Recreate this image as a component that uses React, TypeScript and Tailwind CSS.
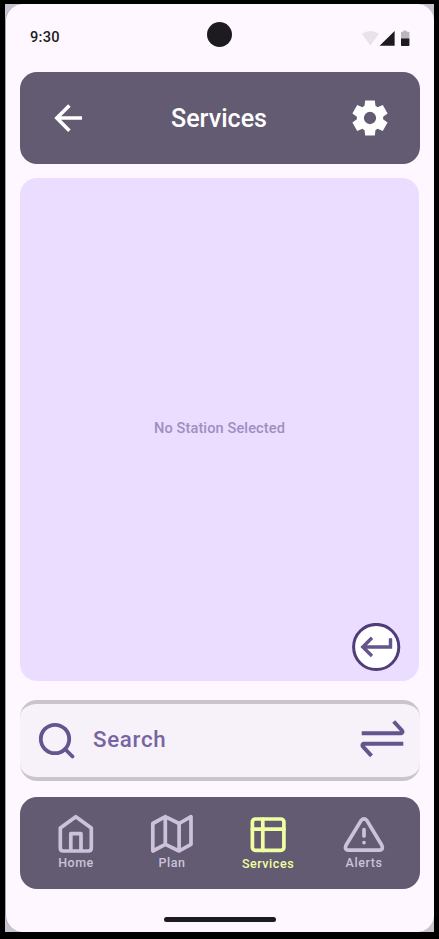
import React from "react";

function StatusBar() {
  return (
    <div className="relative flex h-[68px] w-full shrink-0 items-center justify-between pl-[25px] pr-[23px]">
      <span className="pb-[2px] text-[14.6px] leading-[20px] font-[460] tracking-[0.25px] text-[#1d1b20]">9:30</span>
      <div className="absolute left-[202px] top-[18px] size-[25px] rounded-full bg-[#1d1b20]" />
      <svg className="h-[17px] w-[50px]" viewBox="361 30 50 17" aria-hidden="true">
        <path d="M361.8 33.8Q370.3 28.2 379 33.8L370.3 45.6Z" fill="#e8e3ea" />
        <path d="M379.6 45.8L394.6 31V45.8Z" fill="#1d1b20" />
        <path d="M401 39V32.6Q401 31.8 401.8 31.8H403.3V30.4H406.6V31.8H408.6Q409.4 31.8 409.4 32.6V39Z" fill="#bbb6bd" />
        <path d="M401 38.6H409.4V45.2Q409.4 46 408.6 46H401.8Q401 46 401 45.2Z" fill="#1d1b20" />
      </svg>
    </div>
  );
}

function Header() {
  return (
    <header className="ml-[15px] flex h-[92px] w-[400px] shrink-0 items-center justify-between rounded-[17px] bg-[#625b71] pl-[33px] pr-[32px]">
      <button aria-label="Back">
        <svg className="h-[30px] w-[30px]" viewBox="53 103 30 30" fill="none" stroke="#fff" strokeWidth="3.6">
          <path d="M82 118H56.5M69.4 105.4L56.8 118L69.4 130.8" />
        </svg>
      </button>
      <h1 className="pt-px pl-[3px] text-[25.1px] leading-[32px] font-[460] text-white">Services</h1>
      <button aria-label="Settings">
        <svg className="size-[36px]" viewBox="69 -891 822 822" fill="#fff">
          <path d="m370-80-16-128q-13-5-24.5-12T307-235l-119 50L78-375l103-78q-1-7-1-13.5v-27q0-6.5 1-13.5L78-585l110-190 119 50q11-8 23-15t24-12l16-128h220l16 128q13 5 24.5 12t22.5 15l119-50 110 190-103 78q1 7 1 13.5v27q0 6.5-2 13.5l103 78-110 190-118-50q-11 8-23 15t-24 12L590-80H370Zm110-260q58 0 99-41t41-99-41-99-99-41q-59 0-99.5 41T340-480q0 58 40.5 99t99.5 41Z" />
        </svg>
      </button>
    </header>
  );
}

function StationPanel() {
  return (
    <main className="relative mt-[13.5px] ml-[15px] flex h-[503.5px] w-[399px] shrink-0 items-center justify-center rounded-[17px] bg-[#eaddff]">
      <p className="pb-[2px] text-[14.6px] leading-[20px] font-medium tracking-[0.1px] text-[#9e8fc0]">No Station Selected</p>
      <button aria-label="Enter" className="absolute right-[18px] bottom-[9.5px]">
        <svg className="size-[49px]" viewBox="352 623 49 49" fill="none">
          <circle cx="376.2" cy="647" r="22.6" fill="#fff" stroke="#4f3d7a" strokeWidth="3" />
          <path d="M390.5 638.3V647H363.5M372 637.8L362.8 647L372 656" stroke="#65558f" strokeWidth="3.4" />
        </svg>
      </button>
    </main>
  );
}

function SearchBar() {
  return (
    <div className="mt-[19px] ml-[15px] flex h-[81px] w-[400px] shrink-0 items-center rounded-[17px] border-y-4 border-[#cac4cb] bg-[#f7f1f9] pl-[18px] pr-[14px]">
      <svg className="h-[38px] w-[38px]" viewBox="38 722 38 38" fill="none" stroke="#65558f">
        <circle cx="55" cy="739" r="14.2" strokeWidth="3.8" />
        <path d="M65 749L72.5 756.5" strokeWidth="3.8" strokeLinecap="round" />
      </svg>
      <span className="ml-[17px] grow pb-[3px] text-[22.3px] leading-[28px] font-[460] tracking-[0.7px] text-[#7765a3]">Search</span>
      <svg className="h-[41px] w-[46px]" viewBox="360 720.8 46 41" fill="none" stroke="#65558f" strokeWidth="4" strokeLinejoin="round">
        <path d="M361.7 734H401.5Q403 733 402 731.3L393.7 722.3M403.3 744.5H363.5Q361.8 745.8 363 747.5L371.5 756.6" />
      </svg>
    </div>
  );
}

function NavItem({ label, active, children }: { label: string; active?: boolean; children: React.ReactNode }) {
  return (
    <a className={"flex w-[96px] flex-col items-center " + (active ? "text-[#f0ffa0]" : "text-[#ccc2dc]")}>
      <svg className="h-[44px] w-[48px]" viewBox="0.2 0 48 44" fill="none" stroke="currentColor" strokeWidth="3.7" strokeLinecap="round" strokeLinejoin="round">
        {children}
      </svg>
      <span className={"text-[12.5px] leading-[16px] font-[460] tracking-[0.55px] " + (active ? "mt-px" : "")}>{label}</span>
    </a>
  );
}

function BottomNav() {
  return (
    <nav className="mt-4 ml-[15px] flex h-[92px] w-[400px] shrink-0 justify-center rounded-[17px] bg-[#625b71] pt-[14px]">
      <NavItem label="Home">
        <path d="M24 5.7L39.5 17V37Q39.5 40 36.5 40H11.5Q8.5 40 8.5 37V17ZM19 40V22.7H29.2V40" />
      </NavItem>
      <NavItem label="Plan">
        <path d="M5 12.5L17.5 5.7L31.3 12.5L43.2 5.7V33.3L31.3 40L17.5 33.3L5 40ZM17.5 5.7V33.3M31.3 12.5V40" />
      </NavItem>
      <NavItem label="Services" active>
        <rect x="8.6" y="8" width="31.5" height="31.4" rx="3" />
        <path d="M8.6 18.2H40.1M19 8V39.4" />
      </NavItem>
      <NavItem label="Alerts">
        <path d="M21.4 9.4L6.2 34.3Q4.4 38.9 8.7 39.1H39.5Q43.8 38.9 42 34.3L27 9.4Q24.2 6.2 21.4 9.4ZM24.2 18.5V25M24.2 31.6H24.21" />
      </NavItem>
    </nav>
  );
}

export default function App() {
  return (
    <div className="h-[939px] w-[439px] overflow-hidden bg-black pt-1 pl-[5px] font-['Roboto',sans-serif]">
      <div className="h-[928px] w-[429px] bg-[#cac4d0]">
        <div className="flex h-full w-full flex-col rounded-[17px] bg-[#fef7ff] shadow-[inset_1px_0_0_#aaa4ac]">
          <StatusBar />
          <Header />
          <StationPanel />
          <SearchBar />
          <BottomNav />
          <div className="mt-[28px] ml-[158.5px] h-[4.5px] w-[112.5px] rounded-full bg-[#1d1b20]" />
        </div>
      </div>
    </div>
  );
}
